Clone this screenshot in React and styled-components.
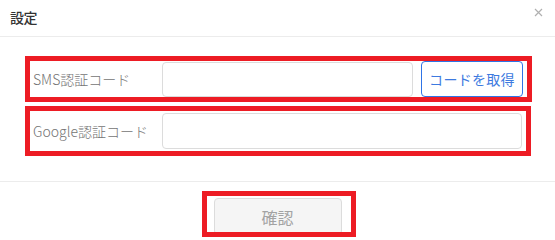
import React from "react";
import styled, { createGlobalStyle } from "styled-components";

const GlobalStyle = createGlobalStyle`
  html, body {
    margin: 0;
    padding: 0;
    background: #fff;
  }
  body {
    font-family: "Noto Sans CJK JP", "Noto Sans", sans-serif;
    color: #333;
  }
  * {
    box-sizing: border-box;
  }
`;

const Dialog = styled.div`
  width: 555px;
  height: 237px;
  overflow: hidden;
  background: #fff;
`;

const Header = styled.div`
  height: 37px;
  display: flex;
  align-items: center;
  justify-content: space-between;
  padding: 0 11px 2px 10px;
  border-bottom: 1px solid #ececec;
`;

const Title = styled.span`
  font-size: 14px;
  font-weight: 500;
  color: #333;
  letter-spacing: -0.5px;
`;

const Close = styled.button`
  width: 10px;
  height: 10px;
  padding: 0;
  border: none;
  background: none;
  display: flex;
  margin-bottom: 8px;
`;

const Body = styled.div`
  padding: 19px 0 25px 25px;
  display: flex;
  flex-direction: column;
  gap: 4px;
  border-bottom: 1px solid #ececec;
`;

const Row = styled.div`
  width: ${(p) => p.$width}px;
  display: flex;
  align-items: center;
  border: 5px solid #ed1c24;
  padding: ${(p) => p.$pad}px 4px ${(p) => p.$pad}px 0;
  gap: 8px;
`;

const Label = styled.label`
  width: 124px;
  flex-shrink: 0;
  padding-left: 3px;
  font-size: 14px;
  font-weight: 300;
  color: #747474;
  white-space: nowrap;
`;

const Input = styled.input`
  flex: 1;
  min-width: 0;
  height: ${(p) => p.$h}px;
  border: 1px solid #dcdcdc;
  border-radius: 4px;
  outline: none;
  background: #fff;
`;

const CodeButton = styled.button`
  width: 102px;
  height: 36px;
  flex-shrink: 0;
  border: 1px solid #2f74e6;
  border-radius: 4px;
  background: #fff;
  color: #3d7ae0;
  font-family: inherit;
  font-size: 14px;
  letter-spacing: 0.3px;
  padding: 0;
`;

const Footer = styled.div`
  display: flex;
  justify-content: center;
  padding-top: 9px;
`;

const FooterBox = styled.div`
  width: 154px;
  height: 46px;
  border: 5px solid #ed1c24;
  padding: 2px 9px 0 7px;
  overflow: hidden;
  margin-left: 2px;
`;

const ConfirmButton = styled.button`
  width: 128px;
  height: 37px;
  border: 1px solid #dcdcdc;
  border-radius: 4px;
  background: #f5f5f5;
  color: #a3a3a3;
  font-family: inherit;
  font-size: 16px;
  padding: 0;
`;

export default function App() {
  return (
    <>
      <GlobalStyle />
      <Dialog>
        <Header>
          <Title>設定</Title>
          <Close aria-label="close">
            <svg width="9" height="9" viewBox="0 0 9 9">
              <path d="M1 1 L8 8 M8 1 L1 8" stroke="#b0b0b0" strokeWidth="1.2" />
            </svg>
          </Close>
        </Header>
        <Body>
          <Row $width={507} $pad={0}>
            <Label>SMS認証コード</Label>
            <Input $h={35} />
            <CodeButton>コードを取得</CodeButton>
          </Row>
          <Row $width={506} $pad={2}>
            <Label>Google認証コード</Label>
            <Input $h={36} />
          </Row>
        </Body>
        <Footer>
          <FooterBox>
            <ConfirmButton disabled>確認</ConfirmButton>
          </FooterBox>
        </Footer>
      </Dialog>
    </>
  );
}
